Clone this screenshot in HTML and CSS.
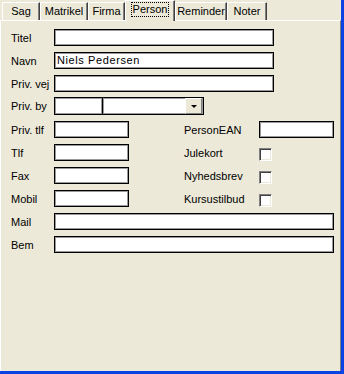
FILE: index.html
```html
<!DOCTYPE html>
<html>
<head>
<meta charset="utf-8">
<link rel="stylesheet" href="styles.css">
</head>
<body>
<div class="window">
  <div class="tabs">
    <div class="tab t-sag">Sag</div>
    <div class="tab t-matrikel">Matrikel</div>
    <div class="tab t-firma">Firma</div>
    <div class="tab t-person active"><span class="focus">Person</span></div>
    <div class="tab t-reminder">Reminder</div>
    <div class="tab t-noter">Noter</div>
  </div>
  <div class="panel">
    <div class="row"><span class="lbl">Titel</span><div class="input w-mid"></div></div>
    <div class="row"><span class="lbl">Navn</span><div class="input w-mid">Niels Pedersen</div></div>
    <div class="row row-pre-combo"><span class="lbl">Priv. vej</span><div class="input w-mid"></div></div>
    <div class="row row-combo"><span class="lbl">Priv. by</span>
      <div class="input zip"></div>
      <div class="input combo"><span class="combo-btn"><span class="arrow"></span></span></div>
    </div>
    <div class="row"><span class="lbl">Priv. tlf</span><div class="input w-small"></div>
      <span class="lbl2">PersonEAN</span><div class="input w-small"></div></div>
    <div class="row"><span class="lbl">Tlf</span><div class="input w-small"></div>
      <span class="lbl2">Julekort</span><span class="check"></span></div>
    <div class="row"><span class="lbl">Fax</span><div class="input w-small"></div>
      <span class="lbl2">Nyhedsbrev</span><span class="check"></span></div>
    <div class="row"><span class="lbl">Mobil</span><div class="input w-small"></div>
      <span class="lbl2">Kursustilbud</span><span class="check"></span></div>
    <div class="row"><span class="lbl">Mail</span><div class="input w-wide"></div></div>
    <div class="row"><span class="lbl">Bem</span><div class="input w-wide"></div></div>
  </div>
</div>
</body>
</html>
```
FILE: styles.css
```css
html, body {
  margin: 0;
  padding: 0;
  background: #ECE9D8;
}
body {
  font-family: "Liberation Sans", Arial, sans-serif;
  font-size: 11px;
  color: #000;
}
.window {
  width: 344px;
  height: 374px;
  box-sizing: border-box;
  border-right: 3px solid #0B42E4;
  border-bottom: 3px solid #0B42E4;
  display: flex;
  flex-direction: column;
  background: #ECE9D8;
}
.tabs {
  height: 20px;
  display: flex;
  align-items: flex-end;
  padding-left: 2px;
  flex: none;
}
.tab {
  box-sizing: border-box;
  height: 18px;
  border-top: 1px solid #fff;
  border-left: 1px solid #fff;
  border-right: 1px solid #404040;
  box-shadow: inset -1px 0 #808080;
  display: flex;
  align-items: center;
  justify-content: center;
  padding-bottom: 1px;
  background: #ECE9D8;
}
.t-sag { width: 38px; }
.t-matrikel { width: 48px; }
.t-firma { width: 37px; }
.t-person { width: 50px; }
.t-reminder { width: 52px; }
.t-noter { width: 40px; }
.tab.active {
  height: 21px;
  margin-bottom: -1px;
  position: relative;
  z-index: 1;
  padding-bottom: 3px;
}
.focus {
  border: 1px dotted #000;
  padding: 0 1px;
  line-height: 13px;
}
.panel {
  flex: 1;
  border-top: 1px solid #fff;
  border-left: 1px solid #fff;
  border-right: 1px solid #808080;
  padding: 8px 0 0 10px;
  display: flex;
  flex-direction: column;
}
.row {
  display: flex;
  align-items: center;
  height: 17px;
  margin-bottom: 6px;
}
.row-pre-combo { margin-bottom: 5px; }
.row-combo { height: 18px; }
.lbl {
  width: 43px;
  flex: none;
}
.lbl2 {
  width: 75px;
  margin-left: 55px;
  flex: none;
}
.input {
  box-sizing: border-box;
  height: 17px;
  background: #fff;
  border: 1px solid #000;
  box-shadow: inset 1px 1px 0 #9a9a9a, inset -1px -1px 0 #9a9a9a;
  font-size: 11px;
  line-height: 15px;
  padding-left: 2px;
  letter-spacing: 0.6px;
  flex: none;
}
.w-mid { width: 220px; }
.w-small { width: 75px; }
.w-wide { width: 280px; }
.zip {
  width: 49px;
  height: 18px;
}
.combo {
  width: 102px;
  height: 18px;
  margin-left: -1px;
  display: flex;
  justify-content: flex-end;
  padding: 1px;
}
.combo-btn {
  width: 15px;
  height: 14px;
  background: #ECE9D8;
  border-left: 1px solid #fff;
  border-top: 1px solid #fff;
  border-right: 1px solid #808080;
  border-bottom: 1px solid #808080;
  display: flex;
  align-items: center;
  justify-content: center;
  box-sizing: content-box;
  margin-top: -1px;
}
.arrow {
  width: 0;
  height: 0;
  border-left: 3px solid transparent;
  border-right: 3px solid transparent;
  border-top: 3px solid #000;
}
.check {
  box-sizing: border-box;
  width: 13px;
  height: 13px;
  align-self: flex-start;
  margin-top: 4px;
  background: #fff;
  border: 1px solid;
  border-color: #808080 #fff #fff #808080;
  box-shadow: inset 1px 1px 0 #404040, inset -1px -1px 0 #ECE9D8;
  flex: none;
}
```
